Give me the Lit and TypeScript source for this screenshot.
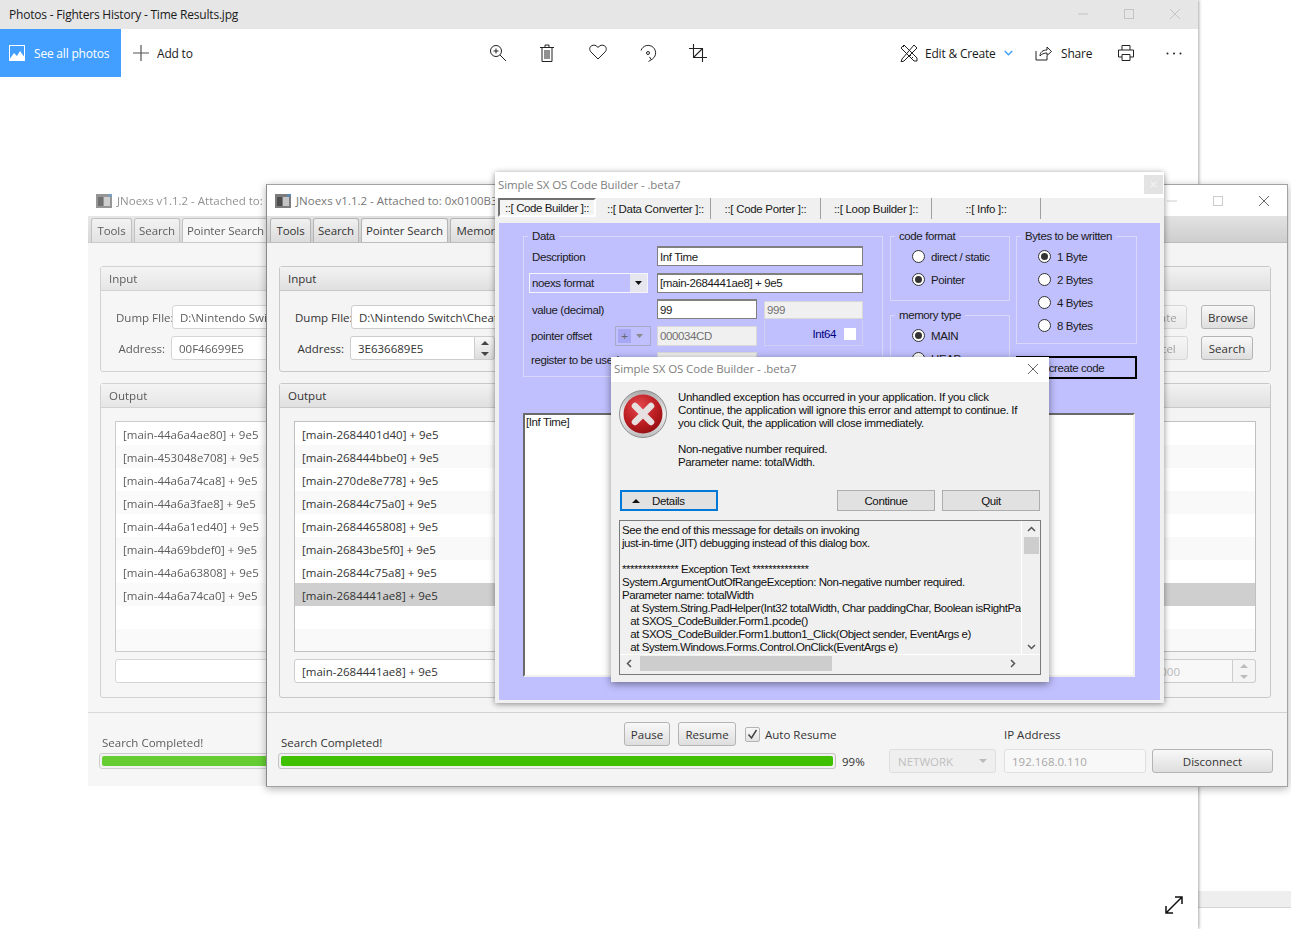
import {css, html, LitElement, nothing} from "lit";
import {customElement, property} from "lit/decorators.js";

const FRONT_ROWS = [
  "[main-2684401d40] + 9e5",
  "[main-268444bbe0] + 9e5",
  "[main-270de8e778] + 9e5",
  "[main-26844c75a0] + 9e5",
  "[main-2684465808] + 9e5",
  "[main-26843be5f0] + 9e5",
  "[main-26844c75a8] + 9e5",
  "[main-2684441ae8] + 9e5",
];

const BACK_ROWS = [
  "[main-44a6a4ae80] + 9e5",
  "[main-453048e708] + 9e5",
  "[main-44a6a74ca8] + 9e5",
  "[main-44a6a3fae8] + 9e5",
  "[main-44a6a1ed40] + 9e5",
  "[main-44a69bdef0] + 9e5",
  "[main-44a6a63808] + 9e5",
  "[main-44a6a74ca0] + 9e5",
];

const DETAIL_LINES = [
  "See the end of this message for details on invoking",
  "just-in-time (JIT) debugging instead of this dialog box.",
  "",
  "************** Exception Text **************",
  "System.ArgumentOutOfRangeException: Non-negative number required.",
  "Parameter name: totalWidth",
  "   at System.String.PadHelper(Int32 totalWidth, Char paddingChar, Boolean isRightPadded)",
  "   at SXOS_CodeBuilder.Form1.pcode()",
  "   at SXOS_CodeBuilder.Form1.button1_Click(Object sender, EventArgs e)",
  "   at System.Windows.Forms.Control.OnClick(EventArgs e)",
];

const closeIcon = html`<svg width="12" height="12" viewBox="0 0 12 12"><path d="M1 1l10 10M11 1L1 11" stroke="currentColor" fill="none"/></svg>`;

@customElement("photos-chrome")
export class PhotosChrome extends LitElement {
  static styles = css`
    :host {
      display: block;
      width: 1198px;
      height: 929px;
      background: #fff;
      box-shadow: 1px 0 3px rgba(0, 0, 0, 0.35);
      font-family: "Open Sans", "Noto Sans", sans-serif;
      font-size: 12px;
      letter-spacing: -0.2px;
      color: #1a1a1a;
    }

    .title {
      height: 29px;
      background: #e6e6e6;
      display: flex;
      align-items: center;
      padding: 0 0 1px 9px;
      box-sizing: border-box;
    }

    .controls {
      margin-left: auto;
      display: flex;
      color: #c4c4c4;
    }

    .controls span {
      width: 46px;
      display: flex;
      justify-content: center;
      align-items: center;
    }

    .toolbar {
      height: 48px;
      display: grid;
      grid-template-columns: 121px 351px 250px 1fr;
      align-items: center;
    }

    .see-all {
      height: 48px;
      background: #439fff;
      color: #fff;
      display: flex;
      align-items: center;
      gap: 9px;
      padding-left: 9px;
      box-sizing: border-box;
    }

    .add {
      display: flex;
      align-items: center;
      gap: 8px;
      padding-left: 12px;
    }

    .center {
      display: flex;
    }

    .center span {
      width: 50px;
      display: flex;
      justify-content: center;
    }

    .shift {
      transform: translateX(1px);
    }

    .right {
      display: flex;
      align-items: center;
      padding-left: 178px;
    }

    .edit {
      width: 135px;
      display: flex;
      align-items: center;
      gap: 7px;
    }

    .chevron {
      margin-left: 1px;
    }

    .share {
      width: 83px;
      display: flex;
      align-items: center;
      gap: 9px;
    }

    .print {
      width: 48px;
    }

    svg {
      display: block;
    }
  `;

  render() {
    return html`
      <div class="title">
        Photos - Fighters History - Time Results.jpg
        <div class="controls">
          <span><svg width="12" height="12" viewBox="0 0 12 12"><path d="M1 6h10" stroke="currentColor"/></svg></span>
          <span><svg width="12" height="12" viewBox="0 0 12 12"><rect x="1.5" y="1.5" width="9" height="9" fill="none" stroke="currentColor"/></svg></span>
          <span>${closeIcon}</span>
        </div>
      </div>
      <div class="toolbar">
        <div class="see-all">
          <svg width="16" height="16" viewBox="0 0 16 16">
            <rect x="0.5" y="0.5" width="15" height="15" fill="none" stroke="#fff"/>
            <path d="M0 15l5-7 3 3 3-5 5 7v3H0z" fill="#fff"/>
          </svg>
          See all photos
        </div>
        <div class="add">
          <svg width="16" height="16" viewBox="0 0 16 16"><path d="M8 0v16M0 8h16" stroke="#555" stroke-width="1.2"/></svg>
          Add to
        </div>
        <div class="center">
          <span class="shift"><svg width="18" height="18" viewBox="0 0 18 18" fill="none" stroke="#222"><circle cx="7" cy="7" r="5.5"/><path d="M11 11l6 6M7 4.5v5M4.5 7h5"/></svg></span>
          <span><svg width="14" height="18" viewBox="0 0 14 18" fill="none" stroke="#222"><path d="M0 3.5h14M5 3.5V1h4v2.5M2 3.5v14h10v-14M5 6v9M7 6v9M9 6v9"/></svg></span>
          <span class="shift"><svg width="18" height="16" viewBox="0 0 18 16" fill="none" stroke="#222"><path d="M9 15L2 8C0 6 .5 3 2.5 1.800 4.500.6 7.500 1 9 3.500 10.500 1 13.500.6 15.500 1.800 17.500 3 18 6 16 8z"/></svg></span>
          <span class="shift"><svg width="18" height="18" viewBox="0 0 18 18" fill="none" stroke="#222"><path d="M2 6.500A7.500 7.500 0 1 1 12 15.800M9.500 17.500l2.800-1.800-1.800-2.800"/><circle cx="9" cy="9" r="1.500"/></svg></span>
          <span class="shift"><svg width="18" height="18" viewBox="0 0 18 18" fill="none" stroke="#222"><path d="M4.500 0v13.500H18M0 4.500h13.500V18M4.500 13.500l9-9" stroke-width="1.100"/></svg></span>
        </div>
        <div class="right">
          <div class="edit">
            <svg width="18" height="18" viewBox="0 0 18 18" fill="none" stroke="#222"><path d="M1 4l3-3 13 13v3h-3zM14 1l3 3-13 13-3 1 1-3zM3 3l1.500-1.500M11 11l-1 1M13 13l-1 1"/></svg>
            Edit &amp; Create
            <svg class="chevron" width="9" height="6" viewBox="0 0 9 6" fill="none" stroke="#439fff" stroke-width="1.500"><path d="M.8 1l3.700 3.700L8.200 1"/></svg>
          </div>
          <div class="share">
            <svg width="17" height="15" viewBox="0 0 17 15" fill="none" stroke="#222"><path d="M1 5v9h11V10M5 10c0-4 3-6 7-6V1l4.500 4.500L12 9.500V7C9 7 6.500 8 5 10z"/></svg>
            Share
          </div>
          <div class="print">
            <svg width="16" height="16" viewBox="0 0 16 16" fill="none" stroke="#222"><path d="M4 5V.5h8V5M4 12H.5V5h15v7H12M4 9.500h8v6H4z"/></svg>
          </div>
          <svg width="16" height="3" viewBox="0 0 16 3" fill="#222"><circle cx="1.500" cy="1.500" r="1"/><circle cx="8" cy="1.500" r="1"/><circle cx="14.500" cy="1.500" r="1"/></svg>
        </div>
      </div>
    `;
  }
}

@customElement("jnoexs-window")
export class JnoexsWindow extends LitElement {
  @property({type: Array}) rows: string[] = [];
  @property() heading = "";
  @property() dump = "";
  @property() address = "";
  @property() field = "";

  static styles = css`
    :host {
      display: block;
      box-sizing: border-box;
      font-family: "Open Sans", "Noto Sans", sans-serif;
      font-size: 11.5px;
      color: #333;
    }

    .title {
      height: 31px;
      background: #fff;
      display: flex;
      align-items: center;
      padding-left: 8px;
      gap: 5px;
      color: #777;
      white-space: nowrap;
    }

    .controls {
      margin-left: auto;
      display: flex;
      color: #666;
    }

    .controls span {
      width: 46px;
      display: flex;
      justify-content: center;
    }

    .controls .inactive {
      color: #ccc;
    }

    .body {
      background: #f4f4f4;
      height: 570px;
    }

    .tabs {
      height: 27px;
      box-sizing: border-box;
      background: linear-gradient(#e2e2e2, #cecece);
      border-bottom: 1px solid #bdbdbd;
      display: flex;
      align-items: flex-end;
      gap: 2px;
      padding-left: 3px;
      overflow: hidden;
      letter-spacing: -0.1px;
    }

    .tab {
      height: 24px;
      box-sizing: border-box;
      display: flex;
      align-items: center;
      justify-content: center;
      white-space: nowrap;
      background: linear-gradient(#f0f0f0, #dcdcdc);
      border: 1px solid #b4b4b4;
      border-bottom: none;
      border-radius: 3px 3px 0 0;
    }

    .tab.on {
      background: #f4f4f4;
    }

    .t-tools {
      width: 41px;
    }

    .t-search {
      width: 46px;
    }

    .t-pointer {
      width: 87px;
    }

    .t-memory {
      width: 96px;
    }

    .content {
      padding: 23px 16px 0 12px;
    }

    .panel {
      border: 1px solid #c8c8c8;
      border-radius: 3px;
      box-sizing: border-box;
    }

    .panel.input {
      height: 106px;
    }

    .panel.output {
      height: 315px;
      margin-top: 11px;
    }

    .panel-head {
      height: 24px;
      box-sizing: border-box;
      background: linear-gradient(#f2f2f2, #e0e0e0);
      border-bottom: 1px solid #c8c8c8;
      padding-left: 8px;
      display: flex;
      align-items: center;
    }

    .input-body {
      padding: 14px 15px 0;
      display: flex;
      flex-direction: column;
      gap: 7px;
    }

    .line {
      display: flex;
      align-items: center;
      height: 24px;
    }

    .lbl-dump {
      width: 56px;
      text-align: right;
      white-space: nowrap;
      flex: none;
    }

    .lbl-addr {
      width: 55px;
      padding: 1px 6px 0 0;
      box-sizing: border-box;
      text-align: right;
      flex: none;
    }

    .text {
      height: 24px;
      box-sizing: border-box;
      background: #fff;
      border: 1px solid #cdcdcd;
      border-radius: 3px;
      padding: 1px 7px 0;
      display: flex;
      align-items: center;
      white-space: nowrap;
      overflow: hidden;
    }

    .grow {
      flex: 1;
      min-width: 0;
    }

    .addr {
      width: 125px;
      border-radius: 3px 0 0 3px;
    }

    .spin {
      width: 20px;
      height: 24px;
      box-sizing: border-box;
      border: 1px solid #cdcdcd;
      border-left: none;
      border-radius: 0 3px 3px 0;
      background: linear-gradient(#f8f8f8, #dcdcdc);
      display: flex;
      flex-direction: column;
      align-items: center;
      justify-content: space-around;
      color: #444;
      flex: none;
    }

    .spin.dim {
      color: #bbb;
      width: 23px;
      background: #f4f4f4;
    }

    .btn {
      height: 24px;
      box-sizing: border-box;
      border: 1px solid #b4b4b4;
      border-radius: 3px;
      background: linear-gradient(#f8f8f8, #dedede);
      display: flex;
      align-items: center;
      justify-content: center;
      flex: none;
      white-space: nowrap;
    }

    .btn.ghost {
      width: 60px;
      opacity: 0.45;
      margin-left: 6px;
    }

    .btn.browse {
      width: 54px;
      margin-left: 14px;
    }

    .btn.search {
      width: 52px;
      margin-left: 13px;
      margin-right: 2px;
    }

    .output-body {
      padding: 13px 14px 0;
    }

    .list {
      height: 231px;
      box-sizing: border-box;
      border: 1px solid #c0c0c0;
      background: #fff;
      overflow: hidden;
    }

    .row {
      height: 23px;
      box-sizing: border-box;
      padding: 1px 0 0 7px;
      display: flex;
      align-items: center;
    }

    .row:nth-child(even) {
      background: #f9f9f9;
    }

    .row.sel {
      background: #cfcfcf;
    }

    .field-row {
      display: flex;
      margin-top: 7px;
    }

    .dim-text {
      width: 423px;
      margin-left: 10px;
      color: #bbb;
      justify-content: flex-end;
      background: #f8f8f8;
      border-radius: 3px 0 0 3px;
      padding-right: 52px;
    }

    .bottom {
      margin-top: 14px;
      border-top: 1px solid #d2d2d2;
      padding: 9px 0 0 11px;
      display: grid;
      grid-template-columns: 558px 53px 107px 8px 142px 6px 121px;
      grid-template-rows: 24px 24px;
      row-gap: 3px;
      align-items: center;
    }

    .status-row {
      grid-column: 1 / 3;
      display: flex;
      align-items: center;
      height: 24px;
    }

    .status {
      width: 346px;
      box-sizing: border-box;
      padding-left: 3px;
      line-height: 16px;
      align-self: flex-end;
      margin-bottom: -5px;
    }

    .pause {
      width: 46px;
      margin-right: 8px;
    }

    .resume {
      width: 58px;
      margin-right: 9px;
    }

    .check {
      display: flex;
      align-items: center;
      gap: 5px;
      white-space: nowrap;
    }

    .box {
      width: 15px;
      height: 15px;
      box-sizing: border-box;
      border: 1px solid #b4b4b4;
      border-radius: 2px;
      background: linear-gradient(#f8f8f8, #e2e2e2);
    }

    .ip-label {
      grid-column: 5 / 8;
      padding-top: 1px;
    }

    .first {
      grid-column: 1;
    }

    .track {
      height: 16px;
      box-sizing: border-box;
      border: 1px solid #c4c4c4;
      border-radius: 3px;
      background: #f0f0f0;
      padding: 2px;
    }

    .fill {
      height: 100%;
      background: #3fc000;
      border-radius: 2px;
    }

    .pct {
      padding-left: 6px;
    }

    .combo {
      height: 24px;
      box-sizing: border-box;
      border: 1px solid #dedede;
      border-radius: 3px;
      background: #efefef;
      color: #c0c0c0;
      padding: 0 8px;
      display: flex;
      align-items: center;
      justify-content: space-between;
    }

    .ip {
      grid-column: 5;
      color: #a8a8a8;
      border-color: #e0e0e0;
      background: #f8f8f8;
    }

    .disc {
      grid-column: 7;
    }

    svg {
      display: block;
    }
  `;

  render() {
    const filler = [0, 1];
    return html`
      <div class="title">
        <svg width="16" height="14" viewBox="0 0 16 14">
          <rect width="16" height="14" fill="#7c7c7c"/>
          <rect x="2" y="3" width="5" height="9" fill="#4d4d4d"/>
          <rect x="8" y="3" width="6" height="9" fill="#c4c4c4"/>
          <rect x="12" y="0" width="4" height="3" fill="#5f87ad"/>
        </svg>
        <span>${this.heading}</span>
        <div class="controls">
          <span class="inactive"><svg width="12" height="12" viewBox="0 0 12 12"><path d="M1 6h10" stroke="currentColor"/></svg></span>
          <span class="inactive"><svg width="12" height="12" viewBox="0 0 12 12"><rect x="1.500" y="1.500" width="9" height="9" fill="none" stroke="currentColor"/></svg></span>
          <span>${closeIcon}</span>
        </div>
      </div>
      <div class="body">
        <div class="tabs">
          <div class="tab t-tools">Tools</div>
          <div class="tab t-search">Search</div>
          <div class="tab on t-pointer">Pointer Search</div>
          <div class="tab t-memory">Memory Viewer</div>
        </div>
        <div class="content">
          <div class="panel input">
            <div class="panel-head">Input</div>
            <div class="input-body">
              <div class="line">
                <span class="lbl-dump">Dump FIle:</span>
                <div class="text grow">${this.dump}</div>
                <div class="btn ghost">Update</div>
                <div class="btn browse">Browse</div>
              </div>
              <div class="line">
                <span class="lbl-addr">Address:</span>
                <div class="text addr">${this.address}</div>
                <div class="spin">
                  <svg width="8" height="4" viewBox="0 0 8 4"><path d="M0 4l4-4 4 4z" fill="currentColor"/></svg>
                  <svg width="8" height="4" viewBox="0 0 8 4"><path d="M0 0l4 4 4-4z" fill="currentColor"/></svg>
                </div>
                <div class="grow"></div>
                <div class="btn ghost">Cancel</div>
                <div class="btn search">Search</div>
              </div>
            </div>
          </div>
          <div class="panel output">
            <div class="panel-head">Output</div>
            <div class="output-body">
              <div class="list">
                ${this.rows.map(
                  (r, i) => html`<div class="row ${i === 7 && this.field ? "sel" : ""}">${r}</div>`
                )}
                ${filler.map(() => html`<div class="row"></div>`)}
              </div>
              <div class="field-row">
                <div class="text grow">${this.field || nothing}</div>
                <div class="text dim-text">1000</div>
                <div class="spin dim">
                  <svg width="8" height="4" viewBox="0 0 8 4"><path d="M0 4l4-4 4 4z" fill="currentColor"/></svg>
                  <svg width="8" height="4" viewBox="0 0 8 4"><path d="M0 0l4 4 4-4z" fill="currentColor"/></svg>
                </div>
              </div>
            </div>
          </div>
        </div>
        <div class="bottom">
          <div class="status-row">
            <div class="status">Search Completed!</div>
            <div class="btn pause">Pause</div>
            <div class="btn resume">Resume</div>
            <div class="check">
              <div class="box">
                <svg width="13" height="13" viewBox="0 0 13 13"><path d="M2.500 6.500l3 3.500 5-8" fill="none" stroke="#444" stroke-width="1.500"/></svg>
              </div>
              Auto Resume
            </div>
          </div>
          <div class="ip-label">IP Address</div>
          <div class="track first"><div class="fill" style="width:100%"></div></div>
          <div class="pct">99%</div>
          <div class="combo">
            NETWORK
            <svg width="8" height="4" viewBox="0 0 8 4"><path d="M0 0l4 4 4-4z" fill="#bbb"/></svg>
          </div>
          <div class="text ip">192.168.0.110</div>
          <div class="btn disc">Disconnect</div>
        </div>
      </div>
    `;
  }
}

@customElement("sx-builder")
export class SxBuilder extends LitElement {
  static styles = css`
    :host {
      display: block;
      width: 669px;
      height: 531px;
      background: #f0f0f0;
      box-shadow: 0 1px 6px rgba(0, 0, 0, 0.45);
      font-family: "Liberation Sans", Arial, sans-serif;
      font-size: 11.500px;
      letter-spacing: -0.4px;
      color: #1a1a1a;
    }

    .title {
      height: 26px;
      box-sizing: border-box;
      background: #fff;
      display: flex;
      align-items: center;
      padding: 0 1px 2px 3px;
      color: #808080;
      font-family: "Open Sans", "Noto Sans", sans-serif;
      font-size: 11.500px;
      letter-spacing: -0.1px;
    }

    .close {
      margin-left: auto;
      width: 19px;
      height: 19px;
      background: #e3e3e3;
      color: #f2f2f2;
      display: flex;
      align-items: center;
      justify-content: center;
    }

    .tabs {
      height: 25px;
      display: flex;
      padding-left: 3px;
      box-sizing: border-box;
      letter-spacing: -0.3px;
    }

    .tab {
      height: 21px;
      display: flex;
      align-items: center;
      justify-content: center;
      box-sizing: border-box;
      border-right: 1px solid #a0a0a0;
      white-space: pre;
    }

    .tab.on {
      width: 98px;
      height: 19px;
      margin-right: 5px;
      border: 2px solid;
      border-color: #707070 #fff #fff #707070;
      background: #f4f4f4;
      letter-spacing: -0.4px;
    }

    .w-110 {
      width: 110px;
    }

    .w-111 {
      width: 111px;
    }

    .w-109 {
      width: 109px;
    }

    .page {
      margin: 0 4px;
      height: 477px;
      box-sizing: border-box;
      background: #c0c0ff;
      padding: 6px 0 0 24px;
    }

    .top {
      display: grid;
      grid-template-columns: 360px 120px 120px;
      column-gap: 7px;
      height: 184px;
    }

    .top > :last-child {
      margin-left: -1px;
    }

    fieldset {
      margin: 0;
      padding: 0;
      min-width: 0;
      border: 1px solid #d9d9f7;
      box-sizing: border-box;
    }

    legend {
      margin-left: 4px;
      padding: 0 4px;
      line-height: 14px;
    }

    .data {
      height: 148px;
    }

    .data-grid {
      display: grid;
      grid-template-columns: 128px 100px 7px 99px;
      grid-auto-rows: 20px;
      row-gap: 6.500px;
      padding: 3px 0 0 5px;
      align-items: center;
    }

    .pad {
      padding: 1px 0 0 3px;
    }

    .reg {
      padding-left: 2px;
      margin-top: -5px;
      white-space: nowrap;
    }

    .span3 {
      grid-column: 2 / 5;
    }

    .input {
      height: 20px;
      box-sizing: border-box;
      background: #fff;
      border: 1px solid #808080;
      border-top-width: 2px;
      padding-left: 2px;
      display: flex;
      align-items: center;
      white-space: nowrap;
      overflow: hidden;
    }

    .input.off {
      background: #f0f0f0;
      color: #707070;
      border: 1px solid #d8d8d8;
    }

    .combo {
      width: 119px;
      height: 20px;
      box-sizing: border-box;
      border: 1px solid #f4f4ff;
      display: flex;
      background: #c0c0ff;
    }

    .combo-text {
      flex: 1;
      padding-left: 2px;
      display: flex;
      align-items: center;
    }

    .combo-arrow {
      width: 17px;
      background: #e6e6ee;
      display: flex;
      align-items: center;
      justify-content: center;
    }

    .off999 {
      height: 18px;
      margin-top: 1px;
    }

    .int-box {
      height: 26px;
      margin-top: -6px;
      box-sizing: border-box;
      border: 1px solid #cfcff2;
      border-top: none;
      display: flex;
      align-items: center;
      justify-content: flex-end;
      gap: 8px;
      padding: 3px 6px 0 0;
      color: #000080;
    }

    .check {
      width: 12px;
      height: 12px;
      background: #fff;
    }

    .pointer {
      display: flex;
      align-items: center;
      padding-left: 2px;
    }

    .pointer span {
      width: 84px;
      flex: none;
    }

    .mini {
      width: 36px;
      height: 20px;
      box-sizing: border-box;
      border: 1px solid #a8a8c8;
      display: flex;
      align-items: center;
      padding: 2px;
      gap: 5px;
      color: #777;
    }

    .mini b {
      width: 13px;
      height: 14px;
      background: #a7a7f2;
      color: #666;
      font-weight: 400;
      text-align: center;
      line-height: 14px;
    }

    .col {
      display: flex;
      flex-direction: column;
    }

    .radios {
      display: flex;
      flex-direction: column;
      padding: 2px 0 0 21px;
    }

    .radio {
      height: 23px;
      display: flex;
      align-items: center;
      gap: 6px;
    }

    .dot {
      width: 13px;
      height: 13px;
      box-sizing: border-box;
      border-radius: 50%;
      border: 1px solid #333;
      background: #fff;
      display: flex;
      align-items: center;
      justify-content: center;
    }

    .dot.on::after {
      content: "";
      width: 7px;
      height: 7px;
      border-radius: 50%;
      background: #333;
    }

    .format {
      height: 72px;
    }

    .memory {
      height: 72px;
      margin-top: 7px;
    }

    .bytes {
      height: 115px;
    }

    .create {
      height: 23px;
      margin-top: 12px;
      box-sizing: border-box;
      border: 2px solid #000;
      display: flex;
      align-items: center;
      justify-content: center;
    }

    .output {
      width: 612px;
      height: 264px;
      box-sizing: border-box;
      background: #fff;
      border: 2px solid;
      border-color: #6a6a6a #f0f0f0 #f0f0f0 #6a6a6a;
      padding: 0 1px;
      line-height: 14px;
    }
  `;

  private radio(label: string, on = false) {
    return html`<div class="radio"><div class="dot ${on ? "on" : ""}"></div>${label}</div>`;
  }

  render() {
    return html`
      <div class="title">
        Simple SX OS Code Builder - .beta7
        <div class="close">
          <svg width="7" height="7" viewBox="0 0 12 12"><path d="M1 1l10 10M11 1L1 11" stroke="currentColor" stroke-width="2" fill="none"/></svg>
        </div>
      </div>
      <div class="tabs">
        <div class="tab on">::[ Code Builder ]::</div>
        <div class="tab w-110">::[ Data Converter ]::</div>
        <div class="tab w-110">::[ Code Porter ]::</div>
        <div class="tab w-111">::[ Loop Builder ]::</div>
        <div class="tab w-109">::[ Info ]::</div>
      </div>
      <div class="page">
        <div class="top">
          <fieldset class="data">
            <legend>Data</legend>
            <div class="data-grid">
              <div class="pad">Description</div>
              <div class="input span3">Inf Time</div>
              <div class="combo">
                <div class="combo-text">noexs format</div>
                <div class="combo-arrow">
                  <svg width="7" height="4" viewBox="0 0 7 4"><path d="M0 0h7L3.500 4z" fill="#111"/></svg>
                </div>
              </div>
              <div class="input span3">[main-2684441ae8] + 9e5</div>
              <div class="pad">value (decimal)</div>
              <div class="input">99</div>
              <div></div>
              <div class="input off off999">999</div>
              <div class="pointer">
                <span>pointer offset</span>
                <div class="mini">
                  <b>+</b>
                  <svg width="7" height="4" viewBox="0 0 7 4"><path d="M0 0h7L3.500 4z" fill="#8a8a8a"/></svg>
                </div>
              </div>
              <div class="input off">000034CD</div>
              <div></div>
              <div class="int-box">Int64<div class="check"></div></div>
              <div class="reg">register to be used</div>
              <div class="input off"></div>
            </div>
          </fieldset>
          <div class="col">
            <fieldset class="format">
              <legend>code format</legend>
              <div class="radios">
                ${this.radio("direct / static")}
                ${this.radio("Pointer", true)}
              </div>
            </fieldset>
            <fieldset class="memory">
              <legend>memory type</legend>
              <div class="radios">
                ${this.radio("MAIN", true)}
                ${this.radio("HEAP")}
              </div>
            </fieldset>
          </div>
          <div class="col">
            <fieldset class="bytes">
              <legend>Bytes to be written</legend>
              <div class="radios">
                ${this.radio("1 Byte", true)}
                ${this.radio("2 Bytes")}
                ${this.radio("4 Bytes")}
                ${this.radio("8 Bytes")}
              </div>
            </fieldset>
            <div class="create">create code</div>
          </div>
        </div>
        <div class="output">[Inf Time]</div>
      </div>
    `;
  }
}

@customElement("error-dialog")
export class ErrorDialog extends LitElement {
  static styles = css`
    :host {
      display: block;
      width: 438px;
      height: 325px;
      background: #f0f0f0;
      box-shadow: 0 2px 8px rgba(0, 0, 0, 0.45);
      font-family: "Liberation Sans", Arial, sans-serif;
      font-size: 11.500px;
      line-height: 13px;
      letter-spacing: -0.35px;
      color: #111;
    }

    .title {
      height: 25px;
      box-sizing: border-box;
      background: #fff;
      display: flex;
      align-items: center;
      padding: 0 10px 2px 3px;
      color: #808080;
      font-family: "Open Sans", "Noto Sans", sans-serif;
      letter-spacing: -0.1px;
    }

    .close {
      margin-left: auto;
      color: #666;
    }

    .msg {
      height: 108px;
      box-sizing: border-box;
      display: flex;
      padding: 8px 0 0 8px;
      gap: 11px;
    }

    .msg-text {
      padding-top: 1px;
    }

    .msg p {
      margin: 0 0 13px;
    }

    .buttons {
      display: flex;
      padding: 0 9px;
    }

    .btn {
      width: 98px;
      height: 21px;
      box-sizing: border-box;
      background: #e1e1e1;
      border: 1px solid #adadad;
      padding-top: 1px;
      display: flex;
      align-items: center;
      justify-content: center;
    }

    .details {
      border: 2px solid #0078d7;
      justify-content: flex-start;
      padding-left: 10px;
      gap: 12px;
    }

    .continue {
      margin-left: auto;
      margin-right: 7px;
    }

    .box {
      margin: 9px 8px 0;
      height: 155px;
      box-sizing: border-box;
      border: 1px solid #7a7a7a;
      display: grid;
      grid-template-columns: 1fr 18px;
      grid-template-rows: 134px 1fr;
    }

    .log {
      padding: 3px 0 0 2px;
      overflow: hidden;
      white-space: pre;
      letter-spacing: -0.45px;
      border-right: 1px solid #fff;
      border-bottom: 1px solid #fff;
    }

    .vbar {
      display: flex;
      flex-direction: column;
      align-items: center;
      padding: 5px 0 4px;
      box-sizing: border-box;
      border-bottom: 1px solid #fff;
    }

    .vthumb {
      width: 15px;
      height: 17px;
      margin-top: 5px;
      background: #cdcdcd;
      margin-bottom: auto;
    }

    .hbar {
      display: flex;
      align-items: center;
      padding: 0 6px 2px 6px;
    }

    .hthumb {
      width: 192px;
      height: 15px;
      margin-left: 8px;
      margin-right: auto;
      background: #cdcdcd;
    }

    svg {
      display: block;
      flex: none;
    }
  `;

  render() {
    return html`
      <div class="title">
        Simple SX OS Code Builder - .beta7
        <div class="close">${closeIcon}</div>
      </div>
      <div class="msg">
        <svg width="48" height="48" viewBox="0 0 48 48">
          <defs>
            <radialGradient id="red" cx="0.4" cy="0.3" r="0.8">
              <stop offset="0" stop-color="#e4484c"/>
              <stop offset="0.6" stop-color="#b81c20"/>
              <stop offset="1" stop-color="#8c0d10"/>
            </radialGradient>
            <linearGradient id="ring" x1="0" y1="0" x2="0" y2="1">
              <stop offset="0" stop-color="#a8a8a8"/>
              <stop offset="0.5" stop-color="#f2f2f2"/>
              <stop offset="1" stop-color="#bcbcbc"/>
            </linearGradient>
          </defs>
          <circle cx="24" cy="24" r="23.500" fill="url(#ring)" stroke="#8f8f8f"/>
          <circle cx="24" cy="24" r="19.500" fill="url(#red)"/>
          <path d="M16 16l16 16M32 16L16 32" stroke="#e6e0e0" stroke-width="6.500" stroke-linecap="round"/>
        </svg>
        <div class="msg-text">
          <p>Unhandled exception has occurred in your application. If you click<br>Continue, the application will ignore this error and attempt to continue. If<br>you click Quit, the application will close immediately.</p>
          <p>Non-negative number required.<br>Parameter name: totalWidth.</p>
        </div>
      </div>
      <div class="buttons">
        <div class="btn details">
          <svg width="8" height="4" viewBox="0 0 8 4"><path d="M0 4l4-4 4 4z" fill="#111"/></svg>
          Details
        </div>
        <div class="btn continue">Continue</div>
        <div class="btn">Quit</div>
      </div>
      <div class="box">
        <div class="log">${DETAIL_LINES.join("\n")}</div>
        <div class="vbar">
          <svg width="9" height="6" viewBox="0 0 9 6"><path d="M1 5l3.500-3.500L8 5" fill="none" stroke="#555" stroke-width="1.500"/></svg>
          <div class="vthumb"></div>
          <svg width="9" height="6" viewBox="0 0 9 6"><path d="M1 1l3.500 3.500L8 1" fill="none" stroke="#555" stroke-width="1.500"/></svg>
        </div>
        <div class="hbar">
          <svg width="6" height="9" viewBox="0 0 6 9"><path d="M5 1L1.500 4.500 5 8" fill="none" stroke="#555" stroke-width="1.500"/></svg>
          <div class="hthumb"></div>
          <svg width="6" height="9" viewBox="0 0 6 9"><path d="M1 1l3.500 3.500L1 8" fill="none" stroke="#555" stroke-width="1.500"/></svg>
        </div>
        <div></div>
      </div>
    `;
  }
}

@customElement("app-root")
export class AppRoot extends LitElement {
  static styles = css`
    :host {
      display: block;
      position: relative;
      width: 1291px;
      height: 929px;
      overflow: hidden;
      background: #fff;
    }

    .band {
      position: absolute;
      left: 1198px;
      top: 891px;
      width: 93px;
      height: 16px;
      background: #eee;
      border-bottom: 1px solid #d4d4d4;
    }

    photos-chrome,
    jnoexs-window,
    sx-builder,
    error-dialog {
      position: absolute;
    }

    photos-chrome {
      left: 0;
      top: 0;
    }

    .back {
      left: 88px;
      top: 185px;
      width: 1021px;
      opacity: 0.8;
      filter: blur(0.35px);
    }

    .front {
      left: 266px;
      top: 184px;
      width: 1022px;
      border: 1px solid #a2a2a2;
      border-left-color: #8a8a8a;
      box-shadow: 0 2px 8px rgba(0, 0, 0, 0.3);
    }

    sx-builder {
      left: 495px;
      top: 172px;
    }

    error-dialog {
      left: 611px;
      top: 357px;
    }

    .expand {
      position: absolute;
      left: 1164px;
      top: 895px;
    }
  `;

  render() {
    return html`
      <div class="band"></div>
      <photos-chrome></photos-chrome>
      <jnoexs-window
        class="back"
        heading="JNoexs v1.1.2 - Attached to: 0x0100B3"
        dump="D:\\Nintendo Switch\\Cheats"
        address="00F46699E5"
        .rows=${BACK_ROWS}
      ></jnoexs-window>
      <jnoexs-window
        class="front"
        heading="JNoexs v1.1.2 - Attached to: 0x0100B3"
        dump="D:\\Nintendo Switch\\Cheats"
        address="3E636689E5"
        field="[main-2684441ae8] + 9e5"
        .rows=${FRONT_ROWS}
      ></jnoexs-window>
      <sx-builder></sx-builder>
      <error-dialog></error-dialog>
      <svg class="expand" width="20" height="20" viewBox="0 0 20 20" fill="none" stroke="#111" stroke-width="1.500">
        <path d="M2 18L18 2M11 2h7v7M2 11v7h7"/>
      </svg>
    `;
  }
}

declare global {
  interface HTMLElementTagNameMap {
    "app-root": AppRoot;
  }
}
